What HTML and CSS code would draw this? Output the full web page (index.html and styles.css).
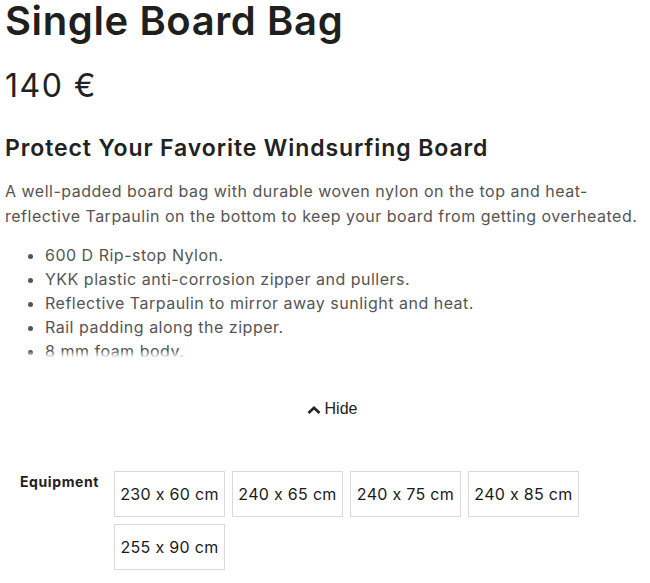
FILE: index.html
```html
<!DOCTYPE html>
<html lang="en">
<head>
<meta charset="utf-8">
<title>Single Board Bag</title>
<link rel="stylesheet" href="styles.css">
</head>
<body>
<main class="product">
  <h1 class="title">Single Board Bag</h1>
  <div class="price">140 €</div>
  <section class="desc">
    <div class="desc-clip">
      <h2 class="desc-heading">Protect Your Favorite Windsurfing Board</h2>
      <p class="desc-text">A well-padded board bag with durable woven nylon on the top and heat-reflective Tarpaulin on the bottom to keep your board from getting overheated.</p>
      <ul class="features">
        <li>600 D Rip-stop Nylon.</li>
        <li>YKK plastic anti-corrosion zipper and pullers.</li>
        <li>Reflective Tarpaulin to mirror away sunlight and heat.</li>
        <li>Rail padding along the zipper.</li>
        <li>8 mm foam body.</li>
        <li>Inflatable air cushion on the nose.</li>
      </ul>
    </div>
    <div class="toggle-row">
      <button class="toggle" type="button">
        <svg class="chev" width="14" height="8" viewBox="0 0 14 8"><path d="M1.5 7 L7 1.8 L12.5 7" fill="none" stroke="#222" stroke-width="2.6"/></svg>
        <span>Hide</span>
      </button>
    </div>
  </section>
  <div class="options">
    <div class="opt-label">Equipment</div>
    <div class="opt-list">
      <div class="opt">230 x 60 cm</div>
      <div class="opt">240 x 65 cm</div>
      <div class="opt">240 x 75 cm</div>
      <div class="opt">240 x 85 cm</div>
      <div class="opt">255 x 90 cm</div>
    </div>
  </div>
</main>
</body>
</html>
```
FILE: styles.css
```css
* { box-sizing: border-box; }
html, body { margin: 0; padding: 0; background: #fff; }
body {
  font-family: Inter, "Open Sans", "Liberation Sans", sans-serif;
  font-feature-settings: "calt" 0;
  color: #222;
}
.product { padding: 0 5px; }
.title {
  margin: 0;
  font-size: 40px;
  font-weight: 600;
  line-height: 42px;
  color: #1f1f1f;
  letter-spacing: 0.6px;
}
.price {
  margin-top: 24px;
  font-size: 32px;
  line-height: 40px;
  font-weight: 400;
  color: #222;
  letter-spacing: 1.5px;
}
.desc { margin-top: 26px; }
.desc-clip {
  max-height: 225px;
  overflow: hidden;
  position: relative;
}
.desc-clip::after {
  content: "";
  position: absolute;
  left: 0; right: 0; bottom: 0;
  height: 6px;
  background: linear-gradient(rgba(255,255,255,0), rgba(255,255,255,0.9));
}
.desc-heading {
  margin: 0;
  font-size: 23px;
  line-height: 32px;
  font-weight: 600;
  color: #222;
  letter-spacing: 0.9px;
}
.desc-text {
  margin: 15px 0 0;
  font-size: 16px;
  line-height: 25px;
  color: #555;
  letter-spacing: 0.5px;
}
.features {
  margin: 14px 0 0;
  padding-left: 40px;
  font-size: 16px;
  line-height: 24px;
  color: #555;
  letter-spacing: 0.5px;
}
.toggle-row {
  display: flex;
  justify-content: center;
  margin-top: 43px;
  padding-left: 14px;
}
.toggle {
  display: flex;
  align-items: center;
  gap: 4px;
  border: 0;
  background: none;
  padding: 0;
  font-family: "Liberation Sans", Arial, sans-serif;
  font-size: 16px;
  line-height: 18px;
  color: #222;
  cursor: pointer;
}
.chev { margin-top: 1px; }
.options {
  display: flex;
  align-items: flex-start;
  margin-top: 53px;
  padding-left: 15px;
}
.opt-label {
  width: 94px;
  padding-top: 2px;
  font-size: 14px;
  font-weight: 700;
  color: #222;
  letter-spacing: 0.6px;
}
.opt-list {
  display: flex;
  flex-wrap: wrap;
  gap: 7px;
  width: 470px;
}
.opt {
  width: 111px;
  height: 46px;
  border: 1px solid #d9d9d9;
  display: flex;
  align-items: center;
  justify-content: center;
  font-size: 16px;
  color: #1a1a1a;
  letter-spacing: 0.3px;
}
```
